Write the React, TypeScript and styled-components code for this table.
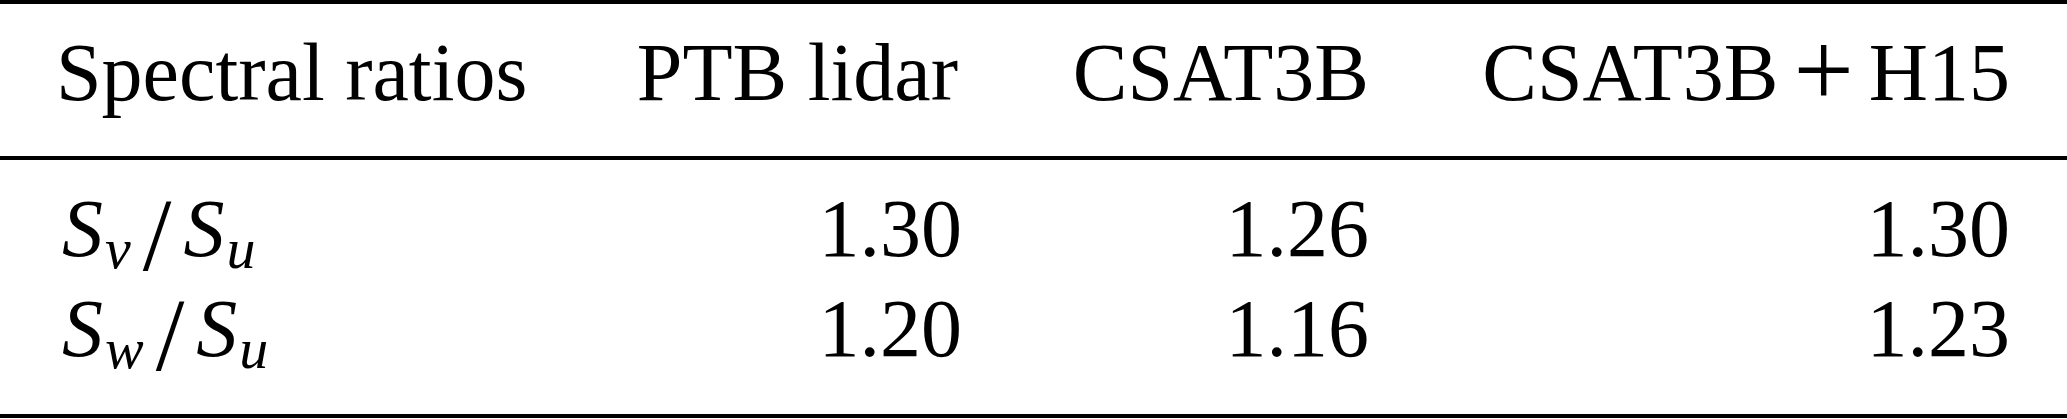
import React from "react";
import styled, { createGlobalStyle } from "styled-components";

const GlobalStyle = createGlobalStyle`
  html, body {
    margin: 0;
    padding: 0;
    background: #ffffff;
  }
`;

const Table = styled.div`
  width: 2067px;
  box-sizing: border-box;
  display: flex;
  flex-direction: column;
  border-top: 4px solid #000;
  border-bottom: 4px solid #000;
  font-family: "Liberation Serif", "Times New Roman", serif;
  font-size: 82px;
  color: #000;
`;

const Row = styled.div`
  display: grid;
  grid-template-columns: 560px 346px 407px 641px;
  padding: 0 57px 0 56px;
`;

const HeadRow = styled(Row)`
  line-height: 82px;
  padding-top: 28px;
  padding-bottom: 42px;
  border-bottom: 4px solid #000;
`;

const Body = styled.div`
  display: flex;
  flex-direction: column;
  padding: 19px 0 35px;
`;

const BodyRow = styled(Row)`
  line-height: 100px;
`;

const Cell = styled.div<{ $right?: boolean; $shift?: number }>`
  white-space: nowrap;
  text-align: ${(p) => (p.$right ? "right" : "left")};
  padding-right: ${(p) => p.$shift ?? 0}px;
`;

const MathCell = styled.div`
  white-space: nowrap;
  font-style: italic;
  padding-left: 6px;
`;

const Sub = styled.span`
  font-size: 58px;
  line-height: 0;
  vertical-align: -12px;
  margin-left: 2px;
`;

const Slash = styled.span`
  font-style: normal;
  font-size: 103px;
  line-height: 0;
  vertical-align: -14px;
  margin: 0 12px;
`;

const Plus = styled.span`
  font-size: 107px;
  line-height: 0;
  vertical-align: -6px;
  margin: 0 15px;
`;

type Ratio = { num: string; den: string; values: string[] };

const rows: Ratio[] = [
  { num: "v", den: "u", values: ["1.30", "1.26", "1.30"] },
  { num: "w", den: "u", values: ["1.20", "1.16", "1.23"] },
];

export default function App() {
  return (
    <>
      <GlobalStyle />
      <Table>
        <HeadRow>
          <Cell>Spectral ratios</Cell>
          <Cell $right $shift={4}>PTB lidar</Cell>
          <Cell $right>CSAT3B</Cell>
          <Cell $right>
            CSAT3B<Plus>+</Plus>H15
          </Cell>
        </HeadRow>
        <Body>
          {rows.map((r) => (
            <BodyRow key={r.num}>
              <MathCell>
                S<Sub>{r.num}</Sub>
                <Slash>/</Slash>S<Sub>{r.den}</Sub>
              </MathCell>
              {r.values.map((v, i) => (
                <Cell key={i} $right>
                  {v}
                </Cell>
              ))}
            </BodyRow>
          ))}
        </Body>
      </Table>
    </>
  );
}
